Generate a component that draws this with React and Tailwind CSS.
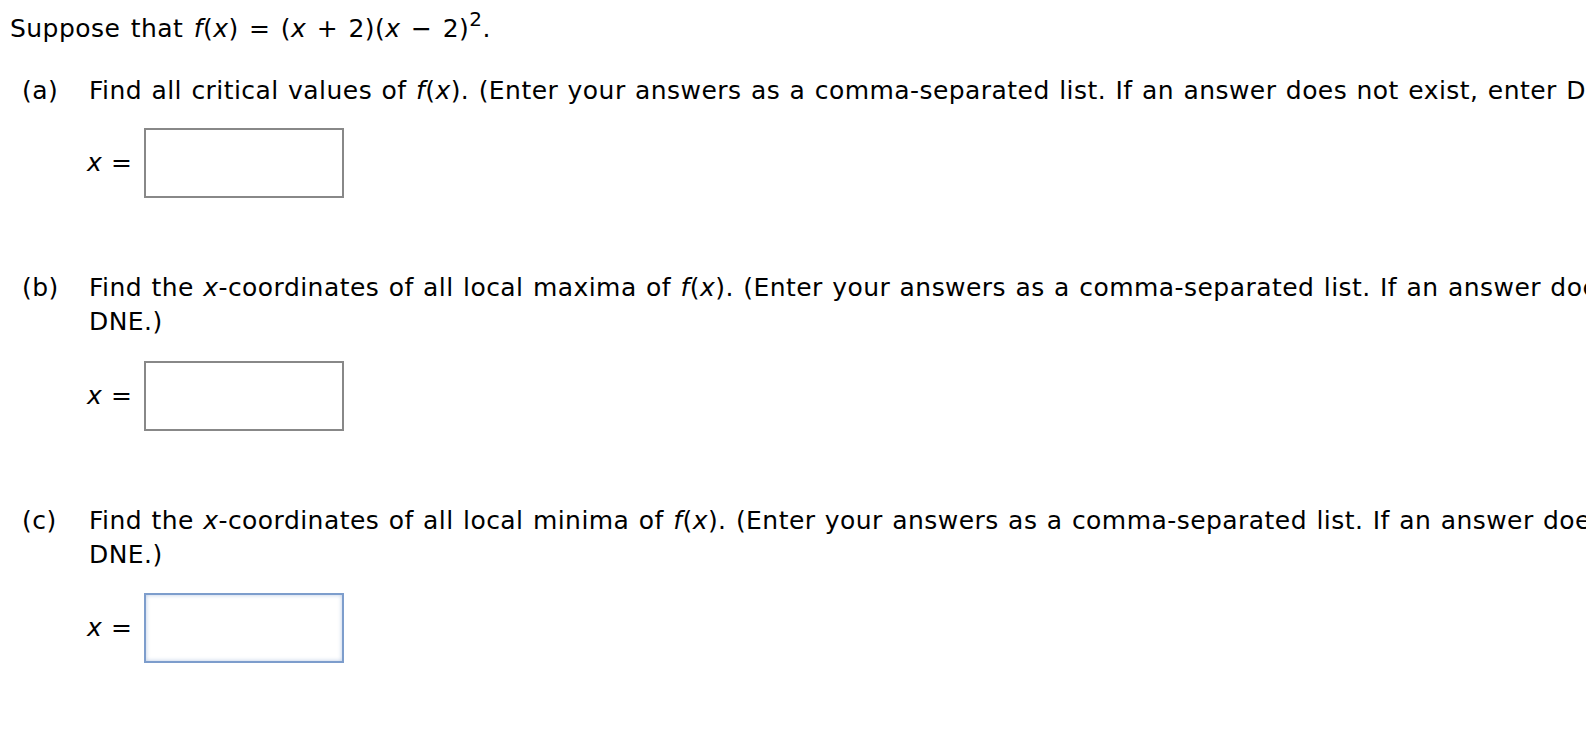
import React from 'react';

const AnswerBox = ({ active }) => (
  <div className="flex items-center pl-[87px] h-[70px]">
    <span className="italic w-[24px]">x</span>
    <span className="w-[33px]">=</span>
    <input
      type="text"
      className={
        active
          ? 'w-[200px] h-[70px] bg-white border-2 border-[#7d9dcc] shadow-[inset_0_0_4px_rgba(125,157,204,0.55)] outline-none'
          : 'w-[200px] h-[70px] bg-white border-2 border-[#888888] outline-none'
      }
    />
  </div>
);

const Part = ({ label, children }) => (
  <div className="flex pl-[22px]">
    <span className="w-[67px] shrink-0">{label}</span>
    <p className="w-[1780px]">{children}</p>
  </div>
);

const Fx = () => (
  <>
    <i>f</i>(<i>x</i>)
  </>
);

export default function App() {
  return (
    <div className="w-full min-h-[748px] bg-white overflow-hidden text-black">
      <div
        className="w-[1900px] text-[25px] leading-[34px] tracking-[0.45px] [word-spacing:1px] pt-[9px]"
        style={{ fontFamily: '"DejaVu Sans", Verdana, sans-serif' }}
      >
        <p className="pl-[10px] h-[34px] [word-spacing:2px]">
          Suppose that <Fx /> = (<i>x</i> + 2)(<i>x</i> − 2)
          <span className="text-[20px] leading-none align-[11px]">2</span>.
        </p>

        <div className="mt-[31px]">
          <Part label="(a)">
            Find all critical values of <Fx />. (Enter your answers as a comma-separated list. If an answer does not exist, enter DNE.)
          </Part>
          <div className="mt-[20px]">
            <AnswerBox />
          </div>
        </div>

        <div className="mt-[73px]">
          <Part label="(b)">
            Find the <i>x</i>-coordinates of all local maxima of <Fx />. (Enter your answers as a comma-separated list. If an answer does not exist, enter DNE.)
          </Part>
          <div className="mt-[22px]">
            <AnswerBox />
          </div>
        </div>

        <div className="mt-[73px]">
          <Part label="(c)">
            Find the <i>x</i>-coordinates of all local minima of <Fx />. (Enter your answers as a comma-separated list. If an answer does not exist, enter DNE.)
          </Part>
          <div className="mt-[21px]">
            <AnswerBox active />
          </div>
        </div>
      </div>
    </div>
  );
}
